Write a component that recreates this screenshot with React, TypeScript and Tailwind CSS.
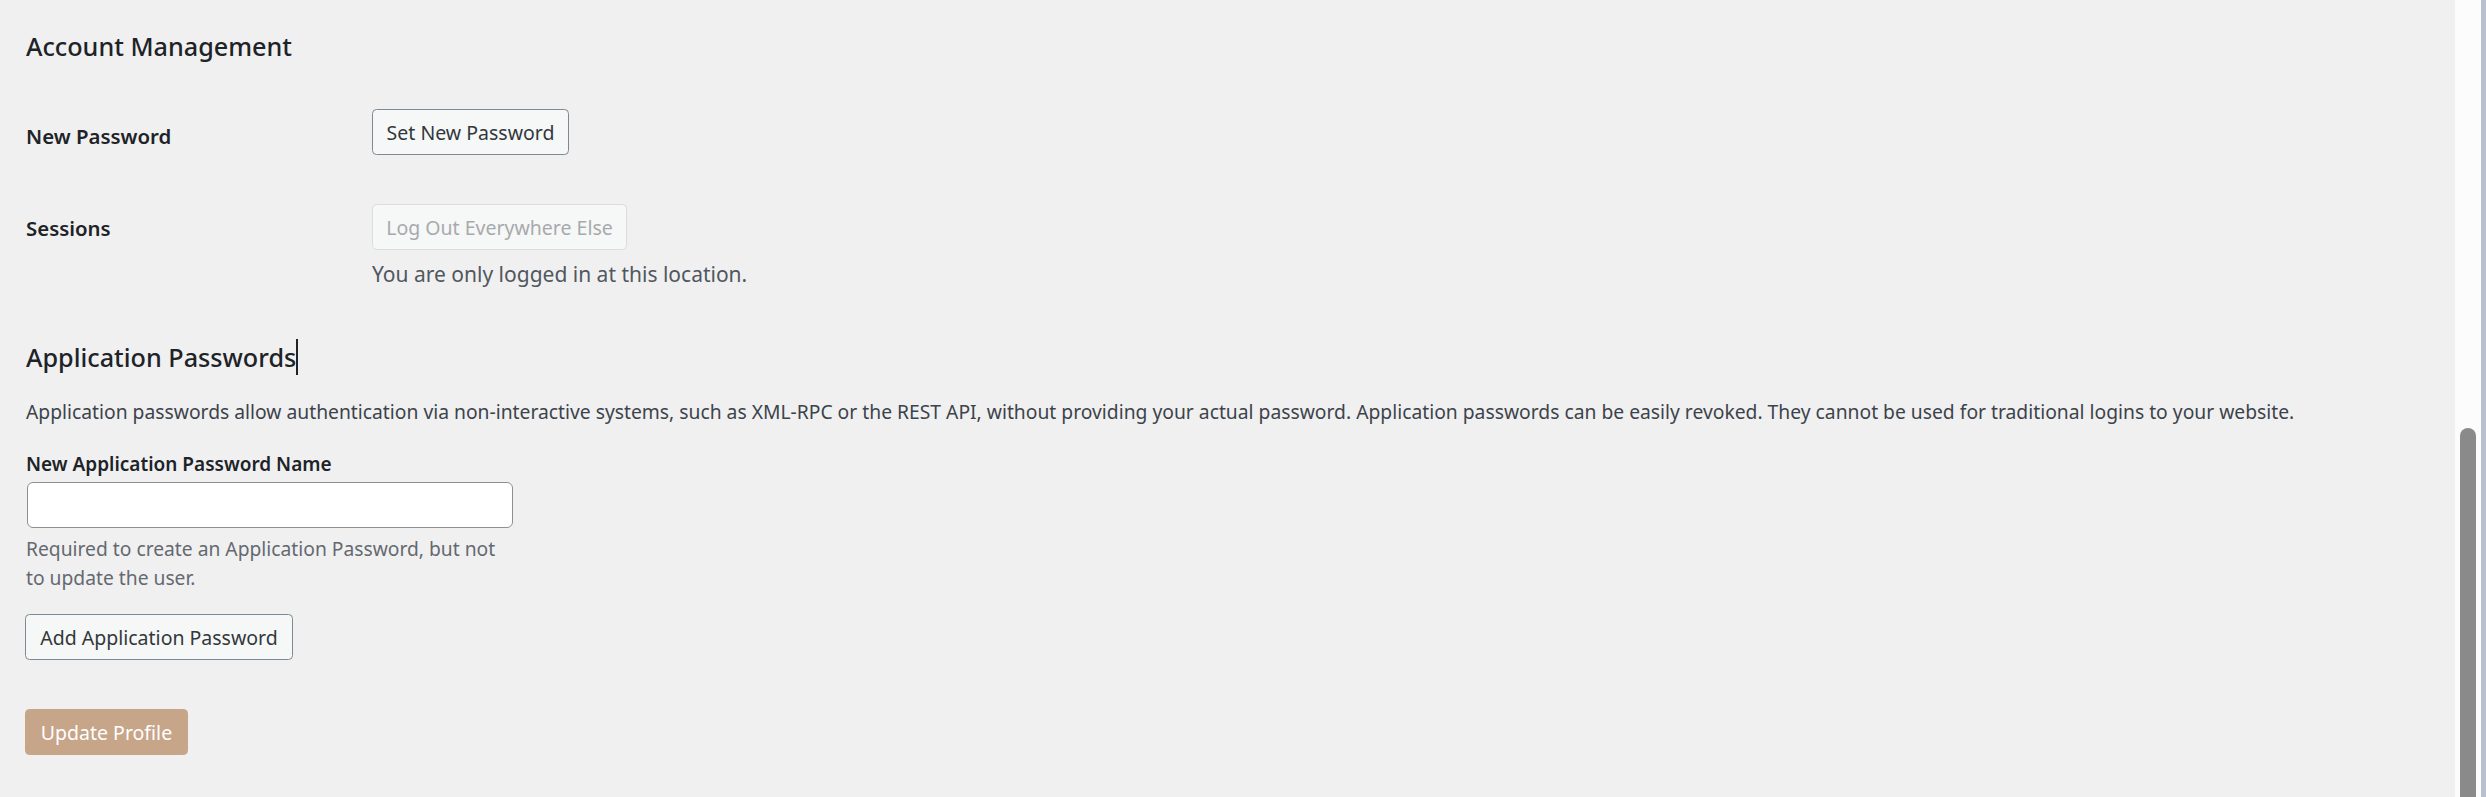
import React from 'react';

const font = { fontFamily: '"Noto Sans", "Open Sans", sans-serif' };

const App = () => {
  return (
    <div className="flex h-[797px] w-full overflow-hidden bg-[#f0f0f1] text-[#1d2327]" style={font}>
      <main className="flex-1 pl-[26px]">
        {/* Account Management */}
        <h2 className="pt-[28px] text-[25.2px] leading-[36px] font-medium text-[#1d2327]">
          Account Management
        </h2>

        <div className="mt-[45px] flex">
          <div className="w-[346px] pt-[13px] text-[20.4px] leading-[29px] font-semibold">New Password</div>
          <button className="flex h-[46px] w-[197px] items-center justify-center rounded-[4.5px] border border-[#7e8993] bg-[#f6f7f7] pt-[2px] text-[19.5px] text-[#32373c]">
            Set New Password
          </button>
        </div>

        <div className="mt-[49px] flex">
          <div className="w-[346px] pt-[10px] text-[20.4px] leading-[29px] font-semibold">Sessions</div>
          <div>
            <button
              disabled
              className="flex h-[46px] w-[255px] items-center justify-center rounded-[4.5px] border border-[#dcdcde] bg-[#f6f7f7] pt-[2px] text-[19.5px] text-[#a7aaad]"
            >
              Log Out Everywhere Else
            </button>
            <p className="mt-[10px] text-[21px] leading-[29px] text-[#50575e]">You are only logged in at this location.</p>
          </div>
        </div>

        {/* Application Passwords */}
        <h2 className="mt-[50px] flex items-center text-[25.2px] leading-[36px] font-medium text-[#1d2327]">
          Application Passwords
          <span className="inline-block h-[36px] w-[2px] bg-[#1d2327]" />
        </h2>

        <p className="mt-[22px] whitespace-nowrap text-[19.3px] leading-[29px] text-[#3c434a]">
          Application passwords allow authentication via non-interactive systems, such as XML-RPC or the REST API, without providing your actual password. Application passwords can be easily revoked. They cannot be used for traditional logins to your website.
        </p>

        <label className="mt-[24px] block text-[19px] leading-[29px] font-semibold text-[#1d2327]">
          New Application Password Name
        </label>
        <input
          type="text"
          className="mt-[3px] ml-px block h-[46px] w-[486px] rounded-[6px] border border-[#8c8f94] bg-white px-3 text-[19.5px] outline-none"
        />
        <p className="mt-[6px] text-[19.25px] leading-[29px] text-[#646970]">
          Required to create an Application Password, but not
          <br />
          to update the user.
        </p>

        <button className="-ml-px mt-[22px] flex h-[46px] w-[268px] items-center justify-center rounded-[4.5px] border border-[#7e8993] bg-[#f6f7f7] pt-[2px] text-[19.5px] text-[#32373c]">
          Add Application Password
        </button>

        <button className="-ml-px mt-[49px] flex h-[46px] w-[163px] items-center justify-center rounded-[4.5px] border border-[#c7a589] bg-[#c7a589] pt-[2px] text-[19.5px] text-white">
          Update Profile
        </button>
      </main>

      {/* scrollbar */}
      <div className="flex w-[26px] justify-center bg-[#fcfcfc] pt-[428px]">
        <div className="h-[400px] w-[16px] rounded-t-full bg-[#8a8a8a]" />
      </div>
      <div className="w-[5px] bg-[#b9c0d0]" />
    </div>
  );
};

export default App;
